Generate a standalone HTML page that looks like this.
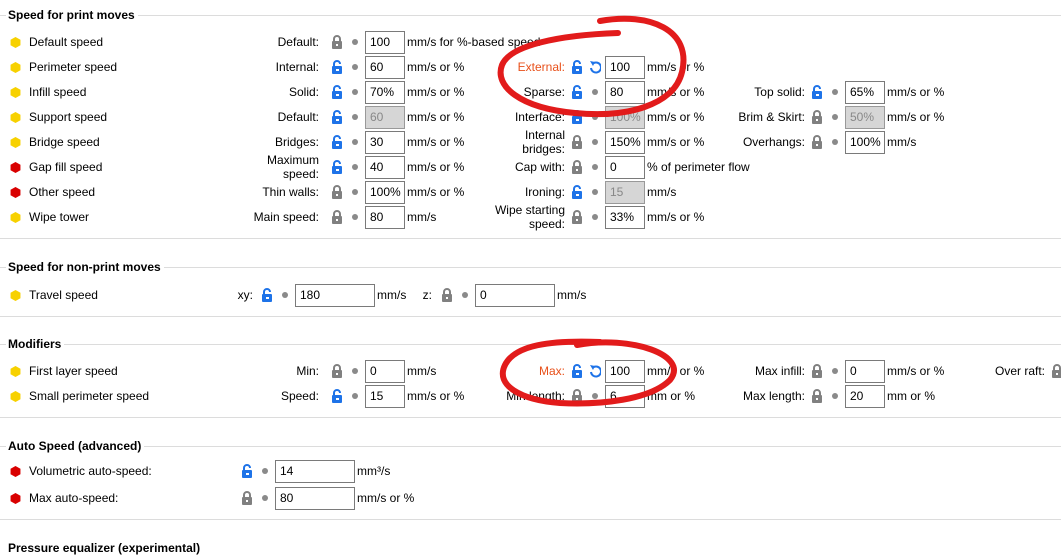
<!DOCTYPE html><html><head><style>
body{margin:0;width:1061px;height:547px;overflow:hidden;background:#fff;font-family:"Liberation Sans",sans-serif;font-size:12px;color:#000;position:relative}
.a{position:absolute;white-space:nowrap;line-height:14px}
.t{font-weight:bold;font-size:12px}
.ln{position:absolute;height:1px;background:#dcdcdc}
.r{text-align:right}
.in{position:absolute;border:1px solid #7a7a7a;background:#fff;box-sizing:border-box;height:23px;padding:3px 0 0 4px;line-height:14px}
.dis{background:#d6d6d6;color:#888;border-color:#999}
.dot{position:absolute;width:6px;height:6px;border-radius:3px;background:#8a8a8a}
.hx{position:absolute;width:11px;height:11px}
</style></head><body>
<svg width="0" height="0" style="position:absolute"><defs>
<symbol id="lc" viewBox="0 0 12 14"><path d="M3 6V4a3 3 0 0 1 6 0v2" fill="none" stroke="#808080" stroke-width="2"/><rect x="1" y="6" width="10" height="8" rx="1" fill="#808080"/><rect x="5" y="9" width="2" height="2" fill="#fff"/></symbol>
<symbol id="lo" viewBox="0 0 12 14"><path d="M3 6V4a3 3 0 0 1 6 0" fill="none" stroke="#1e73e8" stroke-width="2"/><rect x="1" y="6" width="10" height="8" rx="1" fill="#1e73e8"/><rect x="5" y="9" width="3" height="2" fill="#fff"/></symbol>
<symbol id="ar" viewBox="0 0 12 14"><path d="M4 3.5A5 5 0 1 1 2 8" fill="none" stroke="#1e73e8" stroke-width="2"/><path d="M1 1l5 1-2 4z" fill="#1e73e8"/></symbol>
<symbol id="hy" viewBox="0 0 10 10"><polygon points="5,0 9.5,2.5 9.5,7.5 5,10 0.5,7.5 0.5,2.5" fill="#f7d100"/></symbol>
<symbol id="hr" viewBox="0 0 10 10"><polygon points="5,0 9.5,2.5 9.5,7.5 5,10 0.5,7.5 0.5,2.5" fill="#d90000"/></symbol>
</defs></svg>
<div id="c"></div>
<script>
var h='';
function A(x,y,t,cls,st){h+='<div class="a '+(cls||'')+'" style="left:'+x+'px;top:'+(y-7)+'px;'+(st||'')+'">'+t+'</div>';}
function R(xe,y,t,st){h+='<div class="a r" style="right:'+(1061-xe)+'px;top:'+(y-7)+'px;'+(st||'')+'">'+t+'</div>';}
function R2(xe,y,a,b){h+='<div class="a r" style="right:'+(1061-xe)+'px;top:'+(y-14)+'px;line-height:14px">'+a+'<br>'+b+'</div>';}
function L(x,y,o){h+='<svg class="a" style="left:'+x+'px;top:'+(y-7)+'px" width="12" height="14"><use href="#'+(o?'lo':'lc')+'"/></svg>';}
function Ar(x,y){h+='<svg class="a" style="left:'+x+'px;top:'+(y-7)+'px" width="12" height="14"><use href="#ar"/></svg>';}
function D(x,y){h+='<div class="dot" style="left:'+(x-3)+'px;top:'+(y-3)+'px"></div>';}
function I(x,y,w,v,d){h+='<div class="in'+(d?' dis':'')+'" style="left:'+x+'px;top:'+(y-11)+'px;width:'+w+'px">'+v+'</div>';}
function H(y,r){h+='<svg class="hx" style="left:10px;top:'+(y-5)+'px" width="11" height="11"><use href="#'+(r?'hr':'hy')+'"/></svg>';}
function T(y,t){h+='<div class="ln" style="left:0;right:0;top:'+y+'px"></div><div class="a t" style="left:6px;top:'+(y-7)+'px;background:#fff;padding:0 3px 0 2px">'+t+'</div>';}
function S(y){h+='<div class="ln" style="left:0;right:0;top:'+y+'px"></div>';}
function F(c,y,lab,o,v,u,d,arrow,st){var xs=[319,565,805][c],lx=[331,571,811][c];
 if(Array.isArray(lab))R2(xs,y,lab[0],lab[1]);else R(xs,y,lab,st);
 L(lx,y,o); if(arrow)Ar(lx+18,y);else D(lx+24,y); I(lx+34,y,40,v,d); A(lx+76,y,u);}
T(15,'Speed for print moves');
var rows=[['Default speed',0],['Perimeter speed',0],['Infill speed',0],['Support speed',0],['Bridge speed',0],['Gap fill speed',1],['Other speed',1],['Wipe tower',0]];
rows.forEach(function(r,i){var y=42+25*i;H(y,r[1]);A(29,y,r[0]);});
F(0,42,'Default:',0,'100','mm/s for %-based speed');
F(0,67,'Internal:',1,'60','mm/s or %');
F(0,92,'Solid:',1,'70%','mm/s or %');
F(0,117,'Default:',1,'60','mm/s or %',1);
F(0,142,'Bridges:',1,'30','mm/s or %');
F(0,167,['Maximum','speed:'],1,'40','mm/s or %');
F(0,192,'Thin walls:',0,'100%','mm/s or %');
F(0,217,'Main speed:',0,'80','mm/s');
F(1,67,'External:',1,'100','mm/s or %',0,1,'color:#e8501a');
F(1,92,'Sparse:',1,'80','mm/s or %');
F(1,117,'Interface:',1,'100%','mm/s or %',1);
F(1,142,['Internal','bridges:'],0,'150%','mm/s or %');
F(1,167,'Cap with:',0,'0','% of perimeter flow');
F(1,192,'Ironing:',1,'15','mm/s',1);
F(1,217,['Wipe starting','speed:'],0,'33%','mm/s or %');
F(2,92,'Top solid:',1,'65%','mm/s or %');
F(2,117,'Brim &amp; Skirt:',0,'50%','mm/s or %',1);
F(2,142,'Overhangs:',0,'100%','mm/s');
S(238);
T(267,'Speed for non-print moves');
H(295,0);A(29,295,'Travel speed');
R(253,295,'xy:');L(261,295,1);D(285,295);I(295,295,80,'180');A(377,295,'mm/s');
R(432,295,'z:');L(441,295,0);D(465,295);I(475,295,80,'0');A(557,295,'mm/s');
S(316);
T(344,'Modifiers');
H(371,0);A(29,371,'First layer speed');H(396,0);A(29,396,'Small perimeter speed');
F(0,371,'Min:',0,'0','mm/s');F(0,396,'Speed:',1,'15','mm/s or %');
F(1,371,'Max:',1,'100','mm/s or %',0,1,'color:#e8501a');F(1,396,'Min length:',0,'6','mm or %');
F(2,371,'Max infill:',0,'0','mm/s or %');F(2,396,'Max length:',0,'20','mm or %');
R(1045,371,'Over raft:');L(1051,371,0);
S(417);
T(446,'Auto Speed (advanced)');
H(471,1);A(29,471,'Volumetric auto-speed:');H(498,1);A(29,498,'Max auto-speed:');
L(241,471,1);D(265,471);I(275,471,80,'14');A(357,471,'mm³/s');
L(241,498,0);D(265,498);I(275,498,80,'80');A(357,498,'mm/s or %');
S(519);
h+='<div class="a t" style="left:8px;top:541px">Pressure equalizer (experimental)</div>';
h+='<svg class="a" style="left:0;top:0" width="1061" height="547"><path d="M600 21C650 12 692 30 682 72C674 106 625 118 575 113C520 108 494 86 502 65C510 45 560 35 618 33" fill="none" stroke="#e21b1b" stroke-width="6" stroke-linecap="round"/><path d="M577 345C630 335 690 355 670 380C650 400 600 405 560 403C520 400 495 385 505 365C515 345 550 340 600 342" fill="none" stroke="#e21b1b" stroke-width="6" stroke-linecap="round"/></svg>';
document.getElementById('c').innerHTML=h;
</script>
</body></html>
